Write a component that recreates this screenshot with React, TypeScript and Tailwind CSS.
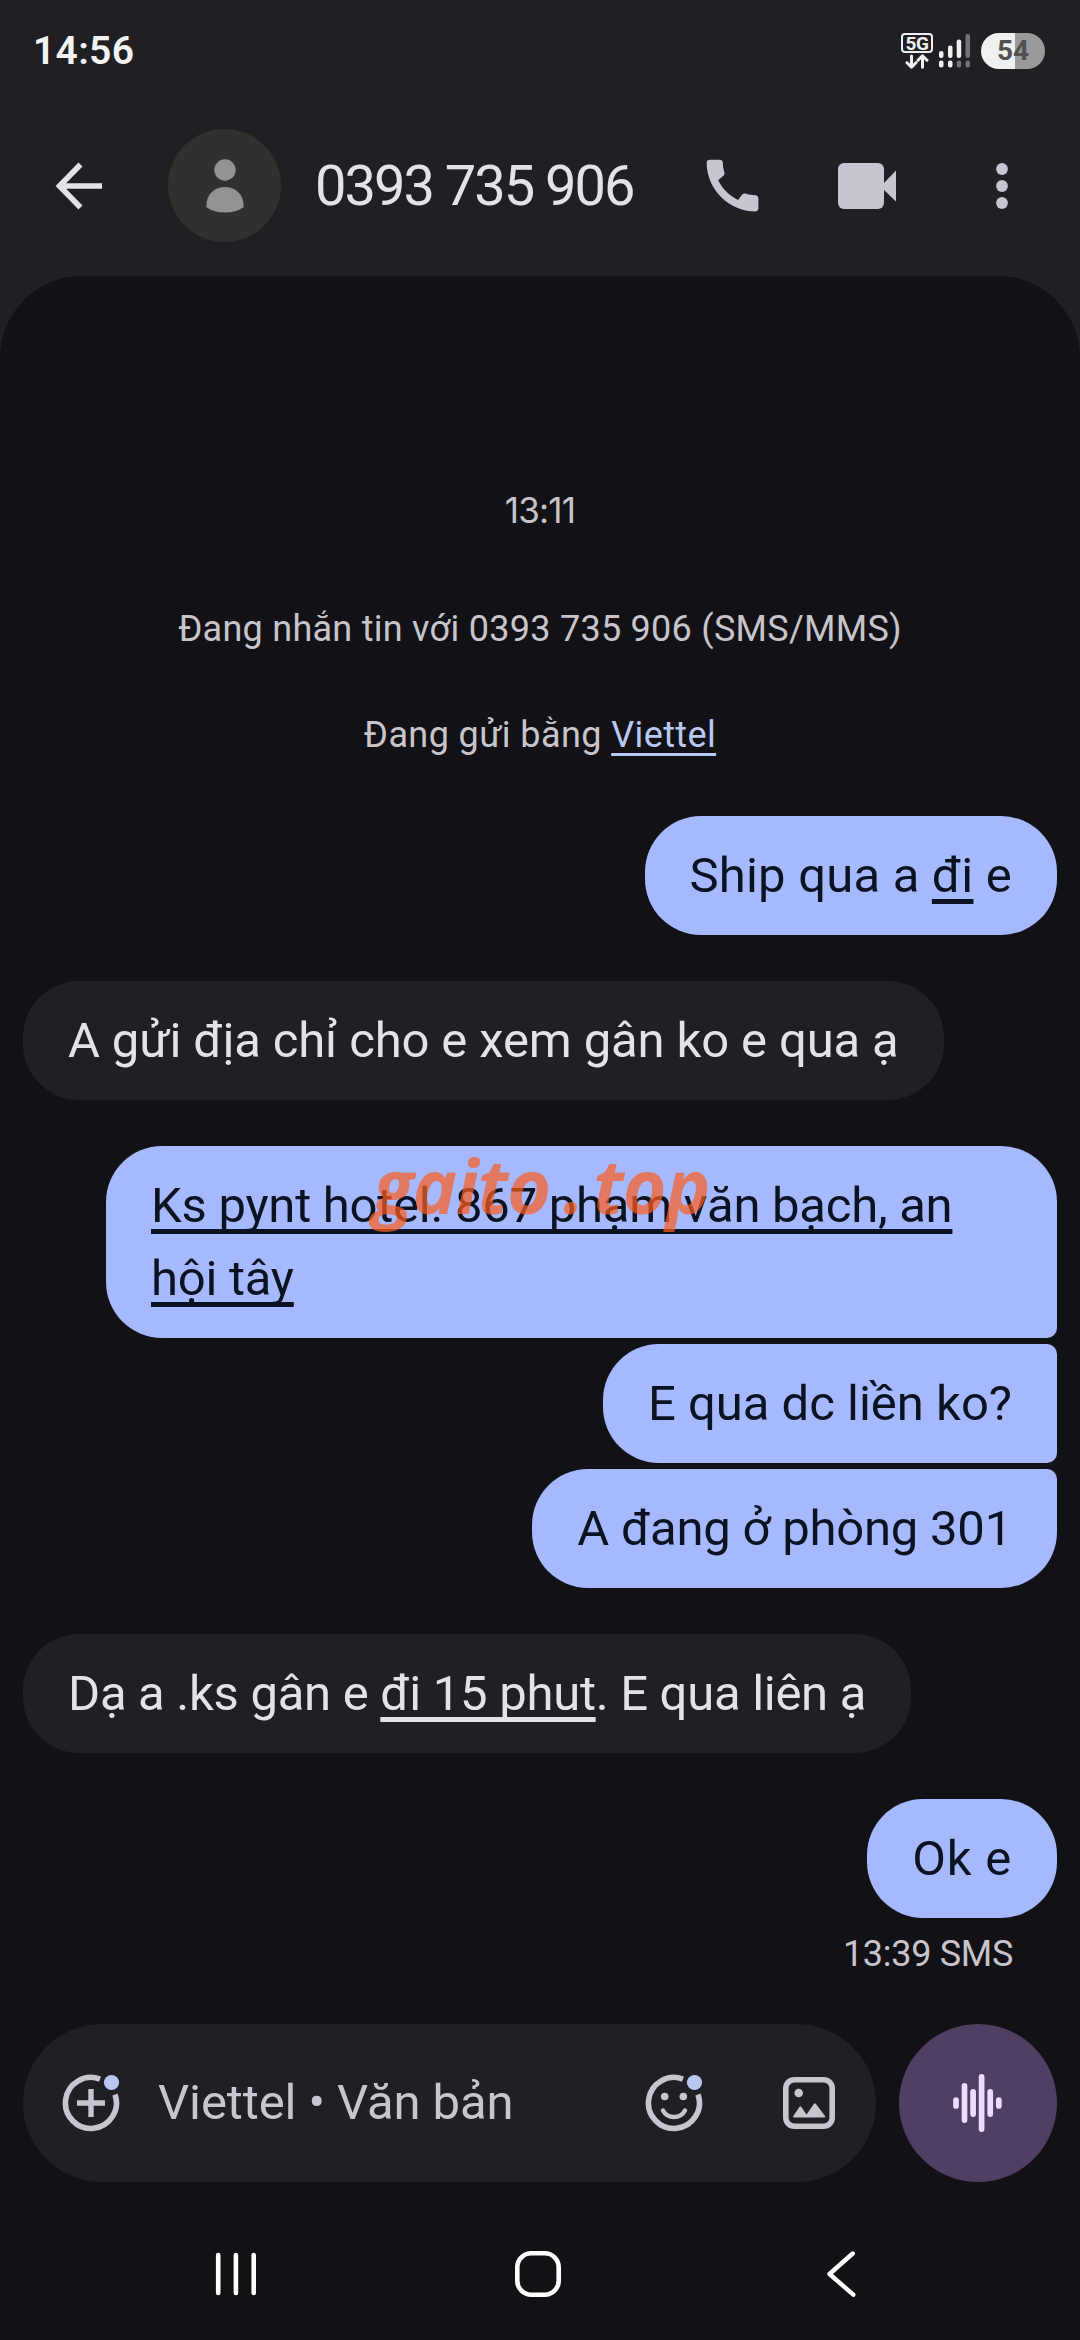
import React from 'react';
import { MdCall } from 'react-icons/md';
import { clsx } from 'clsx';

type Message = {
  id: number;
  mine: boolean;
  className: string;
  body: React.ReactNode;
};

const Linked = ({ children }: { children: React.ReactNode }) => (
  <span className="underline decoration-[5px] underline-offset-[7px] [text-decoration-skip-ink:none]">{children}</span>
);

const messages: Message[] = [
  {
    id: 1,
    mine: true,
    className: 'rounded-[56px] tracking-[0.2px]',
    body: <>Ship qua a <Linked>đi</Linked> e</>,
  },
  {
    id: 2,
    mine: false,
    className: 'mt-[46px] rounded-[56px] tracking-[-0.13px]',
    body: 'A gửi địa chỉ cho e xem gân ko e qua ạ',
  },
  {
    id: 3,
    mine: true,
    className: 'mt-[46px] w-[951px] rounded-[56px] rounded-br-[10px] tracking-[-0.25px]',
    body: <Linked>Ks pynt hotel. 867 phạm văn bạch, an<br />hội tây</Linked>,
  },
  {
    id: 4,
    mine: true,
    className: 'mt-1.5 rounded-l-[56px] rounded-r-[10px]',
    body: 'E qua dc liền ko?',
  },
  {
    id: 5,
    mine: true,
    className: 'mt-1.5 rounded-[56px] rounded-tr-[10px] tracking-[-0.22px]',
    body: 'A đang ở phòng 301',
  },
  {
    id: 6,
    mine: false,
    className: 'mt-[46px] rounded-[56px] tracking-[-0.28px]',
    body: <>Dạ a .ks gân e <Linked>đi 15 phut</Linked>. E qua liên ạ</>,
  },
  {
    id: 7,
    mine: true,
    className: 'mt-[46px] rounded-[56px] tracking-[0.75px]',
    body: 'Ok e',
  },
];

function StatusBar() {
  return (
    <div className="flex h-[102px] items-center justify-between pr-[35px] pl-[33px]">
      <span className="text-[39px] font-semibold tracking-[0.3px] text-[#f3f2f5]">14:56</span>
      <div className="flex items-center">
        <div className="flex w-8 flex-col items-center">
          <span className="flex h-5 w-8 items-center justify-center rounded-[4px] border-2 border-[#f0f0f0] text-[19px] leading-none font-bold tracking-[-0.5px] text-[#f0f0f0]">
            5G
          </span>
          <svg className="mt-px h-[15px] w-6" viewBox="0 0 24 15" fill="none" stroke="#f0f0f0" strokeWidth="3" strokeLinecap="round" strokeLinejoin="round">
            <path d="M6.5 2v11M2 8.7l4.5 4.5 4.5-4.5M17.5 13.2v-11M13 6.3l4.5-4.5L22 6.3" />
          </svg>
        </div>
        <svg className="ml-1.5 h-[34px] w-8" viewBox="0 0 32 34" fill="#f0f0f0">
          <rect x="0" y="17" width="4.5" height="7" rx="2" />
          <rect x="9" y="11.5" width="4.5" height="12.5" rx="2" />
          <rect x="17.7" y="5.5" width="4.5" height="18.5" rx="2" />
          <rect x="26.5" y="0" width="4.5" height="24" rx="2" fill="#737276" />
          <rect x="0" y="26.5" width="4.5" height="7" rx="2" />
          <rect x="9" y="26.5" width="4.5" height="7" rx="2" />
          <rect x="17.7" y="26.5" width="4.5" height="7" rx="2" fill="#737276" />
          <rect x="26.5" y="26.5" width="4.5" height="7" rx="2" fill="#737276" />
        </svg>
        <div className="ml-2.5 flex h-9 w-16 items-center justify-center rounded-full bg-linear-to-r from-[#f0f0f0] from-53% to-[#9a9a9b] to-53% text-[28px] leading-none font-bold text-[#515153]">
          54
        </div>
      </div>
    </div>
  );
}

function Toolbar() {
  return (
    <div className="flex h-[167px] items-center pl-[55px]">
      <svg className="h-12 w-12" viewBox="0 0 48 48" fill="none" stroke="#e4e1e9" strokeWidth="5.6">
        <path d="M25.5 2.5 4.5 24l21 21.5M5 24h42" />
      </svg>
      <div className="ml-[65px] flex h-[113px] w-[113px] items-center justify-center rounded-full bg-[#30302f]">
        <svg className="h-[54px] w-[38px]" viewBox="0 0 38 54" fill="#929493">
          <circle cx="19" cy="11" r="10.7" />
          <path d="M.4 46.5C.4 35 9 28 19 28s18.6 7 18.6 18.5v1.7Q30 53.5 19 53.5T.4 48.2z" />
        </svg>
      </div>
      <h1 className="ml-[34px] w-[321px] text-[56px] leading-none tracking-[-2px] whitespace-nowrap text-[#e4e1e9]">0393 735 906</h1>
      <MdCall className="ml-[62px] h-[69px] w-[69px] text-[#c7c6d0]" />
      <svg className="ml-[71px] h-12 w-[58px]" viewBox="0 0 58 48" fill="#c7c6d0">
        <rect x="0" y="1" width="46" height="46" rx="6" />
        <path d="M45 22 58 8.5v31L45 27z" />
      </svg>
      <svg className="ml-[100px] h-12 w-3" viewBox="0 0 12 48" fill="#c7c6d0">
        <circle cx="6" cy="7" r="5.9" />
        <circle cx="6" cy="24" r="5.9" />
        <circle cx="6" cy="41" r="5.9" />
      </svg>
    </div>
  );
}

function Composer() {
  return (
    <div className="mt-[49px] flex gap-[23px] px-[23px]">
      <div className="flex h-[158px] w-[853px] items-center rounded-full bg-[#201f24] pl-[38px]">
        <svg className="h-[60px] w-[60px]" viewBox="0 0 60 60" fill="none" stroke="#c7c5ce" strokeWidth="5.6">
          <path d="M39 6.1A25.5 25.5 0 1 0 54 21.5" />
          <path d="M30 16v28M16 30h28" strokeWidth="5.4" />
          <circle cx="50.5" cy="9.5" r="7.6" fill="#bac7f0" stroke="none" />
        </svg>
        <span className="-mt-0.5 ml-[37px] text-[49px] leading-none tracking-[-0.1px] whitespace-nowrap text-[#c7c5ce]">Viettel • Văn bản</span>
        <svg className="ml-auto h-[60px] w-[60px]" viewBox="0 0 60 60" fill="none" stroke="#c7c5ce" strokeWidth="5.6">
          <path d="M39 6.1A25.5 25.5 0 1 0 54 21.5" />
          <g fill="#c7c5ce" stroke="none">
            <circle cx="20.7" cy="23.5" r="3.8" />
            <circle cx="39.3" cy="23.5" r="3.8" />
          </g>
          <path d="M19 37.5Q22.5 44 30 44t11-6.5" strokeWidth="4.4" strokeLinecap="round" />
          <circle cx="50.5" cy="9.5" r="7.6" fill="#bac7f0" stroke="none" />
        </svg>
        <svg className="mr-[41px] ml-[79px] h-[52px] w-[52px]" viewBox="0 0 52 52" fill="#c7c5ce">
          <rect x="2.8" y="2.8" width="46.4" height="46.4" rx="8.5" fill="none" stroke="#c7c5ce" strokeWidth="5.6" />
          <circle cx="15.7" cy="16" r="4.3" />
          <path d="M11 40.5q-1.5 0-.7-1.5l6.3-9.2q.8-1 1.6 0l5.3 7.6 7.5-10.6q.9-1.2 1.8 0L42 39q.8 1.5-.8 1.5z" />
        </svg>
      </div>
      <div className="flex h-[158px] w-[158px] items-center justify-center rounded-full bg-[#4f3f63]">
        <svg className="h-[58px] w-[50px]" viewBox="0 0 50 58" fill="none" stroke="#f0dbff" strokeWidth="5.7" strokeLinecap="round">
          <path d="M3 26v6M11.5 11.9v34.2M20.1 17.9v22.2M28.6 2.9v52.2M37.2 17.9v22.2M45.8 26v6" />
        </svg>
      </div>
    </div>
  );
}

function NavBar() {
  return (
    <div className="mt-[66px] flex items-center pl-[215px] text-white">
      <svg className="h-[52px] w-[42px]" viewBox="0 0 42 52" fill="none" stroke="currentColor" strokeWidth="4.6" strokeLinecap="round">
        <path d="M3.2 7v38M20.9 7v38M38.7 7v38" />
      </svg>
      <svg className="ml-[257px] h-12 w-12" viewBox="0 0 48 48" fill="none" stroke="currentColor" strokeWidth="4.6">
        <rect x="3.3" y="3.3" width="41.4" height="41.4" rx="14" />
      </svg>
      <svg className="ml-[263px] h-[50px] w-8" viewBox="0 0 32 50" fill="none" stroke="currentColor" strokeWidth="4.4" strokeLinecap="round" strokeLinejoin="round">
        <path d="M27.7 4.5 4.5 25l23.8 20.7" />
      </svg>
    </div>
  );
}

export default function App() {
  return (
    <div className="relative flex h-[2340px] w-[1080px] flex-col overflow-hidden bg-[#201f24] font-['Roboto',sans-serif]">
      <header className="h-[276px] shrink-0">
        <StatusBar />
        <Toolbar />
      </header>

      <main className="flex grow flex-col rounded-t-[82px] bg-[#121116]">
        <div className="flex flex-col items-center pt-[213px] text-4xl leading-[42px] text-[#c7c5ca]">
          <p className="font-['Inter',sans-serif] text-[35px] leading-[42px] tracking-[-0.8px]">13:11</p>
          <p className="mt-[77px] tracking-[0.27px]">Đang nhắn tin với 0393 735 906 (SMS/MMS)</p>
          <p className="mt-16 tracking-[0.4px]">
            Đang gửi bằng <span className="text-[#bac7f3] underline decoration-[3px] underline-offset-[6px]">Viettel</span>
          </p>
        </div>

        {/* Conversation */}
        <div className="mt-[60px] flex flex-col px-[23px] text-[49px] leading-[73px]">
          {messages.map((m) => (
            <div
              key={m.id}
              className={clsx(
                'px-[45px] py-[23px] whitespace-nowrap',
                m.mine ? 'self-end bg-[#a6b9ff] text-[#0b1321]' : 'self-start bg-[#201f24] text-[#e4e1e9]',
                m.className,
              )}
            >
              {m.body}
            </div>
          ))}
          <span className="mt-[15px] mr-[44px] self-end text-4xl leading-[42px] tracking-[-0.3px] text-[#c7c5ca]">13:39 SMS</span>
        </div>

        <Composer />
        <NavBar />
      </main>

      {/* Watermark over the conversation */}
      <div className="pointer-events-none absolute top-[1138px] left-[373px] flex font-['Open_Sans',sans-serif] text-[75px] leading-[94px] font-bold text-[#fd5d1d]/70 italic">
        <span className="w-[190px] tracking-[-1px]">gaito</span>
        <span className="w-[30px]">.</span>
        <span className="tracking-[-1px]">top</span>
      </div>
    </div>
  );
}
